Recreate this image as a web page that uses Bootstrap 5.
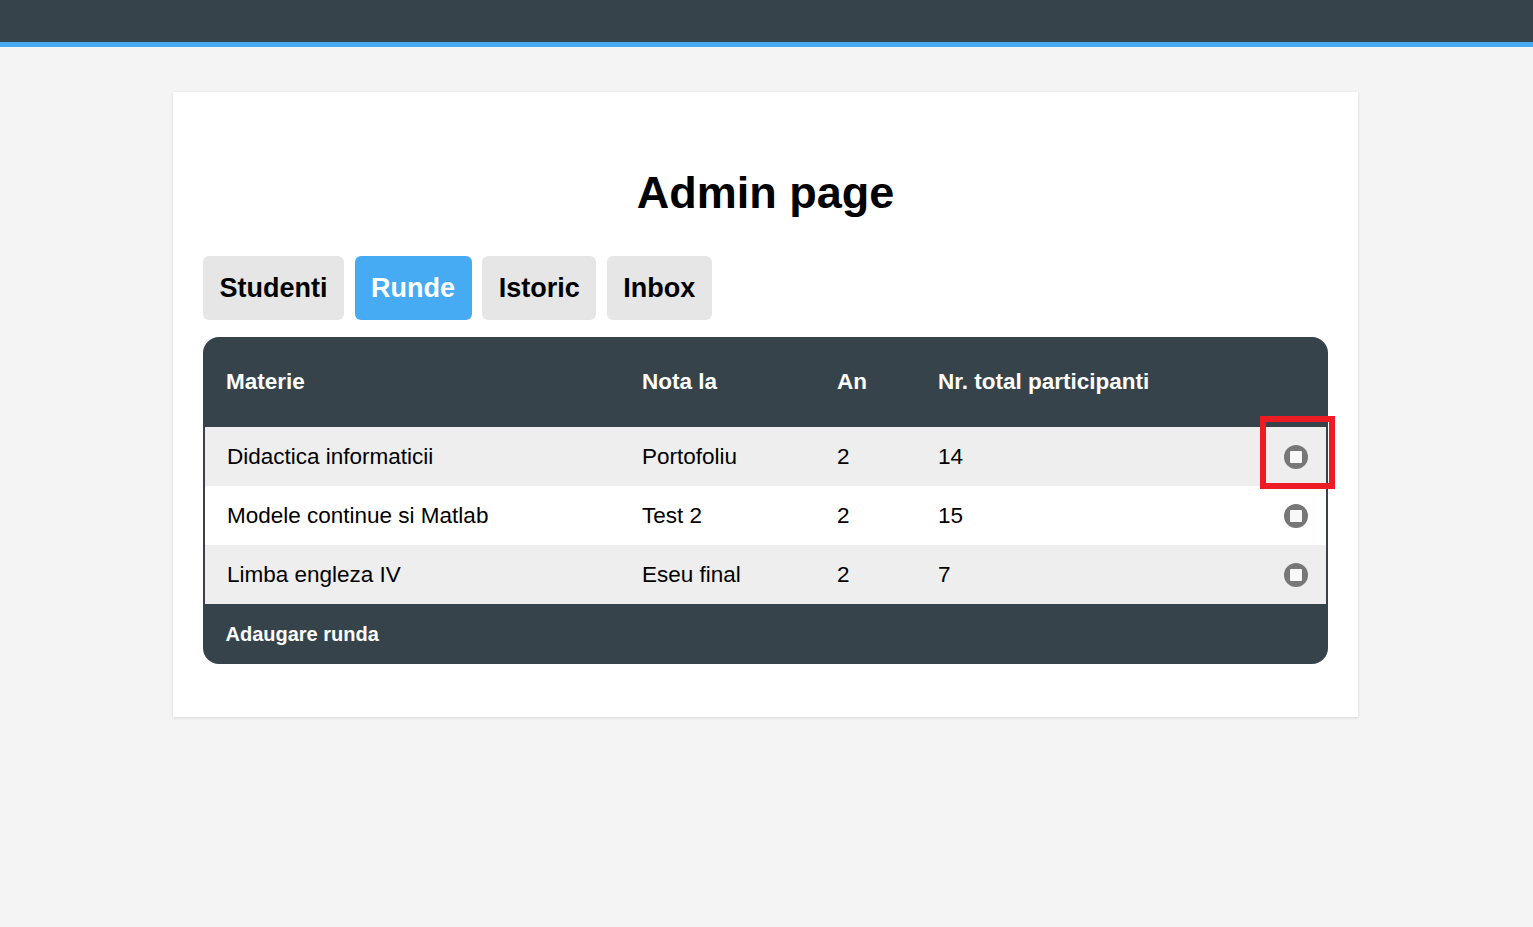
<!DOCTYPE html>
<html lang="ro">
<head>
<meta charset="utf-8">
<title>Admin page</title>
<link rel="stylesheet" href="https://cdn.jsdelivr.net/npm/bootstrap@5.3.0/dist/css/bootstrap.min.css">
<style>
body{background:#f4f4f4;font-family:"Liberation Sans",Arial,sans-serif;color:#000;min-height:927px;position:relative}
.top-strip{height:47px;background:#36434b;border-bottom:5px solid #46abf3}
.sheet{width:1185px;height:625px;margin:45px 0 0 173px;background:#fff;padding:0 30px;box-shadow:0 1px 3px rgba(0,0,0,.12)}
.page-title{font-size:45px;font-weight:700;line-height:52px;text-align:center;margin:0;padding-top:75px;height:164px}
.tab-row{gap:10.6px;height:64px;margin-bottom:17px}
.tab-btn{background:#e6e6e6;color:#000;font-size:27px;font-weight:700;border-radius:6px;padding:0 16.5px;line-height:64px;height:64px;text-decoration:none}
.tab-btn.on{background:#46abf3;color:#fff}
.grid-box{background:#36434b;border-radius:16px;padding:0 2px;height:327px;overflow:hidden}
.rounds{width:100%;border-collapse:collapse;table-layout:fixed;font-size:22.5px}
.rounds th{height:90px;color:#fff;font-weight:700;padding:0 0 1px;vertical-align:middle}
.rounds td{height:59px;padding:0;vertical-align:middle;background:#fff}
.rounds tbody tr:nth-child(odd) td{background:#eee}
.c1{width:437px;padding-left:22px!important}
.c1b{padding-left:21px!important}
.c2{width:195px}.c3{width:101px}.c4{width:328px}
.stop-ico{display:block;width:26px;height:26px;margin-left:17px;filter:blur(.7px)}
.add-link{display:block;color:#fff;font-size:20px;font-weight:700;line-height:60px;padding-left:20.5px;text-decoration:none}
.mark-box{position:absolute;left:1260px;top:416px;width:75px;height:73px;border:6px solid #ed1c24;pointer-events:none}
</style>
</head>
<body>
<div class="top-strip"></div>
<main class="sheet">
  <h1 class="page-title">Admin page</h1>
  <nav class="d-flex tab-row">
    <a class="tab-btn" href="#">Studenti</a>
    <a class="tab-btn on" href="#">Runde</a>
    <a class="tab-btn" href="#">Istoric</a>
    <a class="tab-btn" href="#">Inbox</a>
  </nav>
  <div class="grid-box">
    <table class="rounds">
      <thead>
        <tr><th class="c1 c1b">Materie</th><th class="c2">Nota la</th><th class="c3">An</th><th class="c4">Nr. total participanti</th><th></th></tr>
      </thead>
      <tbody>
        <tr><td class="c1">Didactica informaticii</td><td>Portofoliu</td><td>2</td><td>14</td><td><svg class="stop-ico" viewBox="0 0 26 26"><circle cx="13" cy="13" r="12" fill="#777"/><rect x="7" y="7" width="12" height="12" rx="1" fill="#f8f8f8"/></svg></td></tr>
        <tr><td class="c1">Modele continue si Matlab</td><td>Test 2</td><td>2</td><td>15</td><td><svg class="stop-ico" viewBox="0 0 26 26"><circle cx="13" cy="13" r="12" fill="#777"/><rect x="7" y="7" width="12" height="12" rx="1" fill="#f8f8f8"/></svg></td></tr>
        <tr><td class="c1">Limba engleza IV</td><td>Eseu final</td><td>2</td><td>7</td><td><svg class="stop-ico" viewBox="0 0 26 26"><circle cx="13" cy="13" r="12" fill="#777"/><rect x="7" y="7" width="12" height="12" rx="1" fill="#f8f8f8"/></svg></td></tr>
      </tbody>
    </table>
    <a class="add-link" href="#">Adaugare runda</a>
  </div>
</main>
<div class="mark-box"></div>
<script src="https://cdn.jsdelivr.net/npm/bootstrap@5.3.0/dist/js/bootstrap.bundle.min.js"></script>
</body>
</html>
